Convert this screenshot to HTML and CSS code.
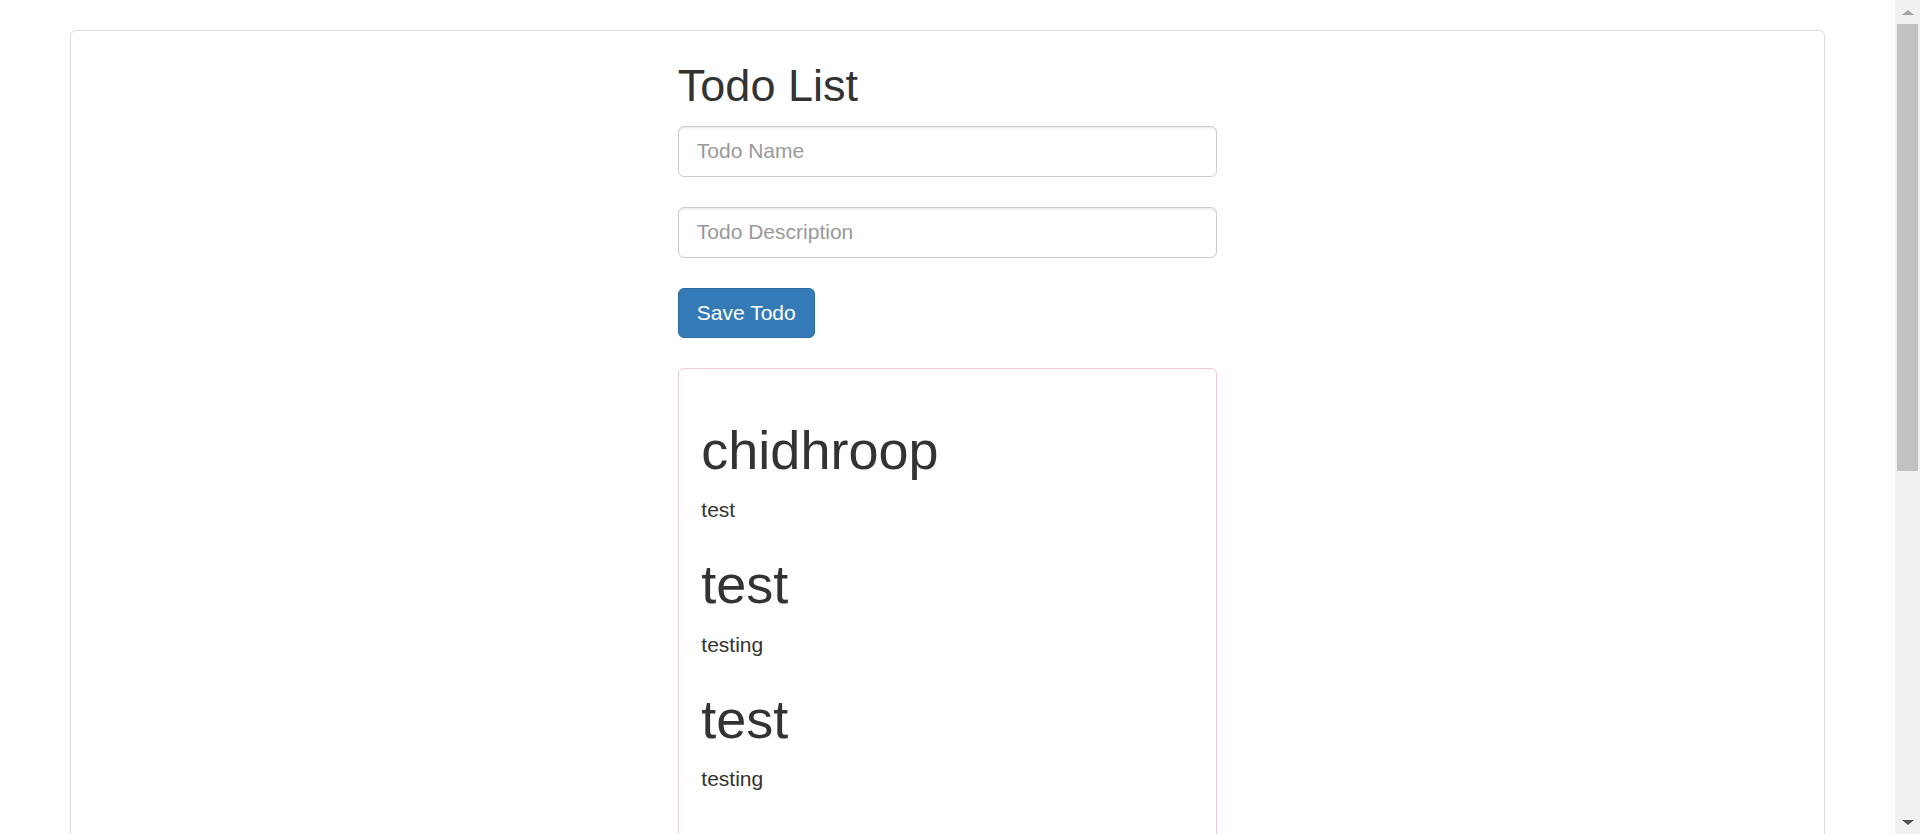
FILE: index.html
```html
<!DOCTYPE html>
<html lang="en">
<head>
<meta charset="utf-8">
<title>Todo List</title>
<link rel="stylesheet" href="styles.css">
</head>
<body>
<div class="page">
  <main class="viewport">
    <div class="panel">
      <div class="panel-grid">
        <div class="col"></div>
        <div class="col col-main">
          <h2 class="title">Todo List</h2>
          <div class="form">
            <input class="form-control" type="text" placeholder="Todo Name">
            <input class="form-control" type="text" placeholder="Todo Description">
            <button class="btn" type="button">Save Todo</button>
            <div class="list-panel">
              <div class="list-body">
                <h1 class="todo-name">chidhroop</h1>
                <p class="todo-desc">test</p>
                <h1 class="todo-name">test</h1>
                <p class="todo-desc">testing</p>
                <h1 class="todo-name">test</h1>
                <p class="todo-desc">testing</p>
                <h1 class="todo-name">test</h1>
                <p class="todo-desc">testing</p>
              </div>
            </div>
          </div>
        </div>
        <div class="col"></div>
      </div>
    </div>
  </main>
  <div class="scrollbar">
    <div class="arrow arrow-up"></div>
    <div class="track">
      <div class="thumb"></div>
    </div>
    <div class="arrow arrow-down"></div>
  </div>
</div>
</body>
</html>
```

FILE: styles.css
```css
html, body {
  margin: 0;
  padding: 0;
  height: 834px;
  overflow: hidden;
  background: #fff;
}

body {
  font-family: "Liberation Sans", Arial, sans-serif;
  font-size: 21px;
  line-height: 30px;
  color: #333;
}

.page {
  display: flex;
  height: 834px;
  overflow: hidden;
}

.viewport {
  flex: 1;
  padding: 30px 70px 0;
  overflow: hidden;
  min-width: 0;
}

.panel {
  border: 1px solid #ddd;
  border-radius: 6px;
  background: #fff;
  min-height: 1200px;
  box-sizing: border-box;
}

.panel-grid {
  display: grid;
  grid-template-columns: 1fr 1fr 1fr;
}

.col-main {
  padding: 0 22.5px;
  display: flex;
  flex-direction: column;
}

.title {
  font-size: 45px;
  font-weight: 500;
  line-height: 49.5px;
  margin: 30px 0 15px;
  color: #333;
}

.form {
  display: flex;
  flex-direction: column;
  gap: 30px;
}

.form-control {
  display: block;
  box-sizing: border-box;
  width: 100%;
  height: 51px;
  padding: 9px 18px;
  font-family: "Liberation Sans", Arial, sans-serif;
  font-size: 21px;
  line-height: 30px;
  color: #555;
  background: #fff;
  border: 1px solid #ccc;
  border-radius: 6px;
  box-shadow: inset 0 1.5px 1.5px rgba(0, 0, 0, 0.075);
  outline: none;
  margin: 0;
}

.form-control::placeholder {
  color: #999;
}

.btn {
  align-self: flex-start;
  box-sizing: border-box;
  height: 50px;
  padding: 9px 18px;
  margin: 0;
  font-family: "Liberation Sans", Arial, sans-serif;
  font-size: 21px;
  line-height: 30px;
  color: #fff;
  background: #337ab7;
  border: 1px solid #2e6da4;
  border-radius: 6px;
}

.list-panel {
  border: 1px solid #ebccd1;
  border-radius: 6px;
  background: #fff;
}

.list-body {
  padding: 22.5px;
}

.todo-name {
  font-size: 54px;
  font-weight: 500;
  line-height: 59.4px;
  margin: 30px 0 15px;
  color: #333;
}

.todo-desc {
  margin: 0 0 15px;
  font-size: 21px;
  line-height: 30px;
}

.scrollbar {
  width: 25px;
  flex: 0 0 25px;
  background: #f0f0f0;
  display: flex;
  flex-direction: column;
  align-items: center;
}

.arrow {
  width: 25px;
  height: 24px;
  flex: 0 0 24px;
  display: flex;
  align-items: center;
  justify-content: center;
}

.arrow::before {
  content: "";
  width: 0;
  height: 0;
  border-left: 6px solid transparent;
  border-right: 6px solid transparent;
}

.arrow-up::before {
  border-bottom: 5px solid #a3a3a3;
}

.arrow-down::before {
  border-top: 5px solid #505050;
}

.track {
  flex: 1;
  width: 100%;
  display: flex;
  justify-content: center;
}

.thumb {
  width: 21px;
  height: 447px;
  background: #c1c1c1;
}
```
